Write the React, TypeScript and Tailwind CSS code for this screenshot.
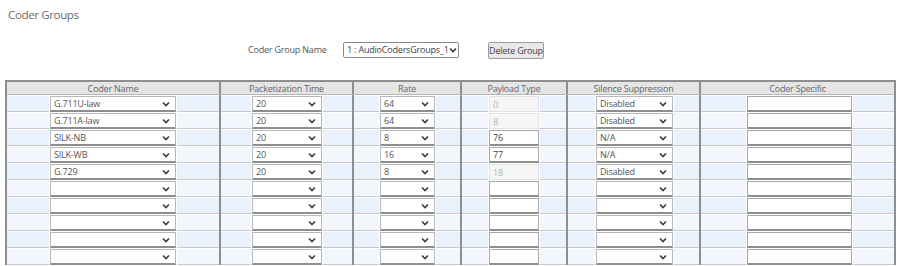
type Kind = "select" | "input";

interface Col {
  title: string;
  l: string;
  c: string;
  r: string;
  kind: Kind;
}

const COLS: Col[] = [
  { title: "Coder Name", l: "w-[42px]", c: "w-[126px]", r: "w-[42px]", kind: "select" },
  { title: "Packetization Time", l: "w-[30px]", c: "w-[70px]", r: "w-[29px]", kind: "select" },
  { title: "Rate", l: "w-[25px]", c: "w-[55px]", r: "w-[24px]", kind: "select" },
  { title: "Payload Type", l: "w-[26px]", c: "w-[50px]", r: "w-[26px]", kind: "input" },
  { title: "Silence Suppression", l: "w-[27px]", c: "w-[77px]", r: "w-[25px]", kind: "select" },
  { title: "Coder Specific", l: "w-[45px]", c: "w-[105px]", r: "w-[41px]", kind: "input" },
];

// header widths include the 2px separator on the right
const HEAD_W = ["w-[214px]", "w-[133px]", "w-[108px]", "w-[106px]", "w-[133px]", "w-[193px]"];

// name, ptime, rate, payload, payloadDisabled, silence
const ROWS: [string, string, string, string, boolean, string][] = [
  ["G.711U-law", "20", "64", "0", true, "Disabled"],
  ["G.711A-law", "20", "64", "8", true, "Disabled"],
  ["SILK-NB", "20", "8", "76", false, "N/A"],
  ["SILK-WB", "20", "16", "77", false, "N/A"],
  ["G.729", "20", "8", "18", true, "Disabled"],
  ["", "", "", "", false, ""],
  ["", "", "", "", false, ""],
  ["", "", "", "", false, ""],
  ["", "", "", "", false, ""],
  ["", "", "", "", false, ""],
];

const TXT = "text-[9px] tracking-[-0.2px]";

function Chevron() {
  return (
    <svg width="8" height="6" viewBox="0 0 8 6" className="shrink-0">
      <path d="M1 1.5 L4 4.5 L7 1.5" fill="none" stroke="#3c3c3c" strokeWidth="1.6" />
    </svg>
  );
}

function FakeSelect({ value, width }: { value: string; width: string }) {
  return (
    <div
      className={`${width} h-full flex items-center justify-between bg-white border border-[#b8b8b8] border-b-2 border-b-[#8e8e8e] pl-[3px] pr-[5px] ${TXT} leading-[13px] text-[#555]`}
    >
      <span className="whitespace-nowrap">{value}</span>
      <Chevron />
    </div>
  );
}

function FakeInput({ value, width, disabled }: { value: string; width: string; disabled: boolean }) {
  return disabled ? (
    <div
      className={`${width} h-full flex items-center bg-[#f6f6f6] border border-[#e2e2e2] pl-[3px] ${TXT} leading-[13px] text-[#b3b3b3]`}
    >
      {value}
    </div>
  ) : (
    <div
      className={`${width} h-full flex items-center bg-white border border-[#a8a8a8] border-b-2 border-b-[#8e8e8e] pl-[3px] ${TXT} leading-[13px] text-[#444]`}
    >
      {value}
    </div>
  );
}

function Row({ data, odd }: { data: (typeof ROWS)[number]; odd: boolean }) {
  const [name, ptime, rate, payload, payloadDisabled, silence] = data;
  const values = [name, ptime, rate, payload, silence, ""];
  const pad = odd ? "bg-[#e9f1fc]" : "bg-[#f3f7fd]";
  return (
    <div className="flex h-[17px]">
      {COLS.map((col, i) => (
        <div
          key={col.title}
          className={`flex gap-px pt-px ${i < COLS.length - 1 ? "border-r-2 border-[#8f8f8f]" : ""}`}
        >
          <div className={`${col.l} ${pad} border-b border-[#c9c9c9]`} />
          {col.kind === "select" ? (
            <FakeSelect value={values[i]} width={col.c} />
          ) : (
            <FakeInput value={values[i]} width={col.c} disabled={i === 3 && payloadDisabled} />
          )}
          <div className={`${col.r} ${pad} border-b border-[#c9c9c9]`} />
        </div>
      ))}
    </div>
  );
}

export default function App() {
  return (
    <div className="w-[900px] h-[266px] bg-white font-['Open_Sans',sans-serif] text-[#666] overflow-hidden">
      <div className="pl-[8px] pt-[6px] text-[11.5px] tracking-[-0.35px] leading-[18px] text-[#6a6a6a]">
        Coder Groups
      </div>

      <div className={`flex items-center h-[16px] mt-[18px] pl-[248px] ${TXT} whitespace-nowrap`}>
        <span className="w-[95px] text-[#555]">Coder Group Name</span>
        <div className="w-[116px] h-[16px] flex items-center justify-between border border-[#8a8a8a] rounded-[2px] bg-white pl-[3px] pr-[4px] text-[#444]">
          <span>1 : AudioCodersGroups_1</span>
          <Chevron />
        </div>
        <button className={`ml-[29px] w-[56px] h-[17px] bg-[#e9e9e9] border border-[#9a9a9a] rounded-[2px] ${TXT} leading-none text-[#444] whitespace-nowrap`}>
          Delete Group
        </button>
      </div>

      <div className="mt-[22px] ml-[5px] w-[891px] border-2 border-[#8f8f8f] border-b-0 bg-white">
        <div className="flex h-[13px] bg-[#e5e5e5] border-b border-[#b5b5b5]">
          {HEAD_W.map((w, i) => (
            <div
              key={i}
              className={`${w} shrink-0 flex items-center justify-center ${TXT} leading-none text-[#666] whitespace-nowrap ${i < HEAD_W.length - 1 ? "border-r-2 border-[#8f8f8f]" : ""}`}
            >
              {COLS[i].title}
            </div>
          ))}
        </div>
        {ROWS.map((r, i) => (
          <Row key={i} data={r} odd={i % 2 === 0} />
        ))}
      </div>
    </div>
  );
}
